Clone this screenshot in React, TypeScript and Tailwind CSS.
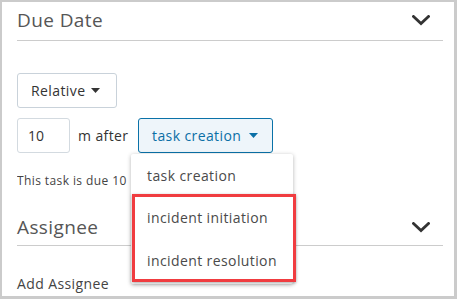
import React from "react";

const Chevron = () => (
  <svg width="18" height="11" viewBox="0 0 18 11" fill="none">
    <polyline points="1.5,1.5 9,8.5 16.5,1.5" stroke="#333" strokeWidth="2.8" strokeLinecap="square" strokeLinejoin="miter" />
  </svg>
);

const Caret = ({ color }: { color: string }) => (
  <svg width="9" height="5" viewBox="0 0 9 5">
    <polygon points="0,0 9,0 4.5,5" fill={color} />
  </svg>
);

export default function App() {
  return (
    <div
      className="w-[457px] h-[299px] overflow-hidden bg-white border-[#cbcbcb] border-t-2 border-l-2 border-r-[3px] border-b-[3px] text-[#565656]"
      style={{ fontFamily: '"Open Sans", "Noto Sans", sans-serif' }}
    >
      <div className="pl-[15px] pr-[11px]">
        {/* Due Date header */}
        <div className="h-[39px] flex items-center justify-between border-b border-[#cccccc]">
          <span className="text-[19px] leading-none pb-[2px] tracking-[0.4px]">Due Date</span>
          <span className="mr-[13px] mb-[2px] flex"><Chevron /></span>
        </div>

        <div className="pt-[32px]">
          <button className="w-[100px] h-[35px] border border-[#c9d2da] rounded-[3px] flex items-center pl-[13px] gap-[6px] text-[14px] tracking-[0.4px] text-[#333]">
            <span>Relative</span>
            <Caret color="#333" />
          </button>

          <div className="mt-[10px] flex items-center">
            <div className="w-[53px] h-[35px] border border-[#d3dae0] rounded-[3px] flex items-center pl-[10px] text-[14px] text-[#333]">10</div>
            <span className="ml-[8px] w-[52px] text-[14px] tracking-[0.4px] text-[#333] whitespace-nowrap">m after</span>
            <div className="relative ml-[8px]">
              <button className="w-[135px] h-[35px] border border-[#0a72a8] bg-[#eef5fa] rounded-[3px] flex items-center pl-[13px] gap-[8px] text-[14px] tracking-[0.4px] text-[#0a6fa6]">
                <span>task creation</span>
                <Caret color="#0a6fa6" />
              </button>
              <div className="absolute left-[-7px] top-[36px] w-[162px] h-[130px] bg-white shadow-[0_1px_4px_rgba(0,0,0,0.3)] rounded-[2px] z-10 text-[14px] tracking-[0.4px] text-[#4a4a4a]">
                <div className="h-[42px] flex items-center pl-[16px]">task creation</div>
                <div className="h-[43px] flex items-center pl-[16px]">incident initiation</div>
                <div className="h-[43px] flex items-center pl-[16px]">incident resolution</div>
                <div className="absolute left-[1px] top-[40px] w-[164px] h-[88px] border-[3px] border-[#f03c40] shadow-[0_1px_3px_rgba(0,0,0,0.35)]" />
              </div>
            </div>
          </div>

          <div className="mt-[20px] w-[113px] overflow-hidden whitespace-nowrap text-[12px] leading-[16px] tracking-[0.4px] text-[#444]">This task is due 10 minutes after task creation</div>
        </div>

        {/* Assignee header */}
        <div className="mt-[20px] h-[37px] flex items-center justify-between border-b border-[#cccccc]">
          <span className="text-[19px] leading-none tracking-[0.4px]">Assignee</span>
          <span className="mr-[13px] flex"><Chevron /></span>
        </div>

        <div className="mt-[30px] text-[14px] leading-[16px] tracking-[0.4px] text-[#444]">Add Assignee</div>
      </div>
    </div>
  );
}
